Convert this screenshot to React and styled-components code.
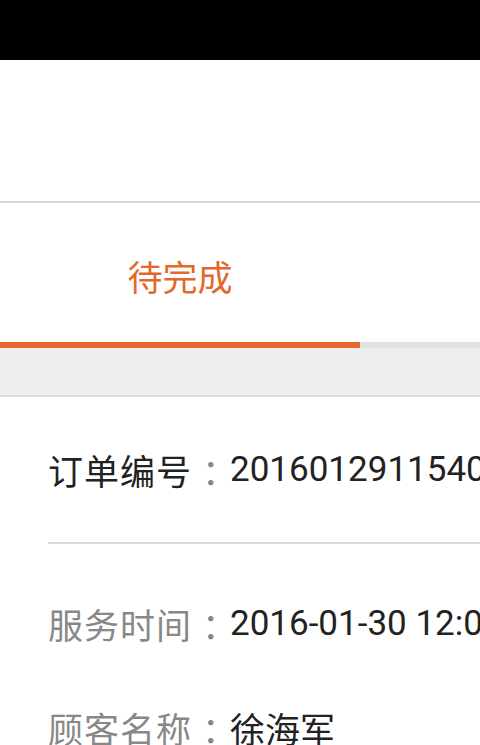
import React from "react";
import styled, { createGlobalStyle } from "styled-components";

const GlobalStyle = createGlobalStyle`
  html, body {
    margin: 0;
    padding: 0;
    background: #ffffff;
    font-family: "Roboto", "Noto Sans CJK SC", sans-serif;
  }
`;

const Screen = styled.div`
  width: 480px;
  height: 745px;
  overflow: hidden;
  display: flex;
  flex-direction: column;
  background: #ffffff;

  & > * {
    flex-shrink: 0;
  }
`;

const StatusBar = styled.div`
  height: 60px;
  background: #000000;
`;

const TitleBar = styled.div`
  height: 141px;
  background: #ffffff;
  border-bottom: 2px solid #d9d9d9;
`;

const Tabs = styled.div`
  display: flex;
  height: 139px;
`;

const Tab = styled.div`
  width: 360px;
  display: flex;
  align-items: center;
  justify-content: center;
  font-size: 35px;
  color: ${p => (p.active ? "#e4672b" : "#666666")};
  padding-top: 6px;
  box-sizing: border-box;
`;

const Track = styled.div`
  height: 6px;
  background: #e2e2e2;
`;

const Indicator = styled.div`
  height: 100%;
  background: #e4672b;
`;

const Band = styled.div`
  height: 47px;
  background: #f0eeec;
  border-bottom: 2px solid #dcdcdc;
`;

const Section = styled.div`
  padding-left: 48px;
  padding-top: ${p => p.top || 0}px;
`;

const Row = styled.div`
  height: ${p => p.h}px;
  display: flex;
  align-items: center;
  font-size: 35px;
  white-space: nowrap;
  overflow: hidden;
`;

const Label = styled.span`
  color: ${p => (p.strong ? "#222222" : "#888888")};
  letter-spacing: 1px;
`;

/* full-width colon glyph sits at the left of its box; narrow its advance */
const Colon = styled.span`
  color: #888888;
  flex: 0 0 38px;
  padding-left: 10px;
  box-sizing: border-box;
  letter-spacing: -26px;
`;

const Value = styled.span`
  color: #222222;
`;

const Divider = styled.div`
  height: 2px;
  margin-left: 48px;
  background: #dadada;
`;

const details = [
  { label: "服务时间", value: "2016-01-30 12:00" },
  { label: "顾客名称", value: "徐海军" },
];

export default function App() {
  return (
    <>
      <GlobalStyle />
      <Screen>
        <StatusBar />
        <TitleBar />
        <Tabs>
          <Tab active>待完成</Tab>
        </Tabs>
        <Track>
          <Indicator style={{ width: "75%" }} />
        </Track>
        <Band />
        <Section>
          <Row h={145}>
            <Label strong>订单编号</Label>
            <Colon>：</Colon>
            <Value>20160129115402</Value>
          </Row>
        </Section>
        <Divider />
        <Section top={27}>
          {details.map(d => (
            <Row h={104} key={d.label}>
              <Label>{d.label}</Label>
              <Colon>：</Colon>
              <Value>{d.value}</Value>
            </Row>
          ))}
        </Section>
      </Screen>
    </>
  );
}
